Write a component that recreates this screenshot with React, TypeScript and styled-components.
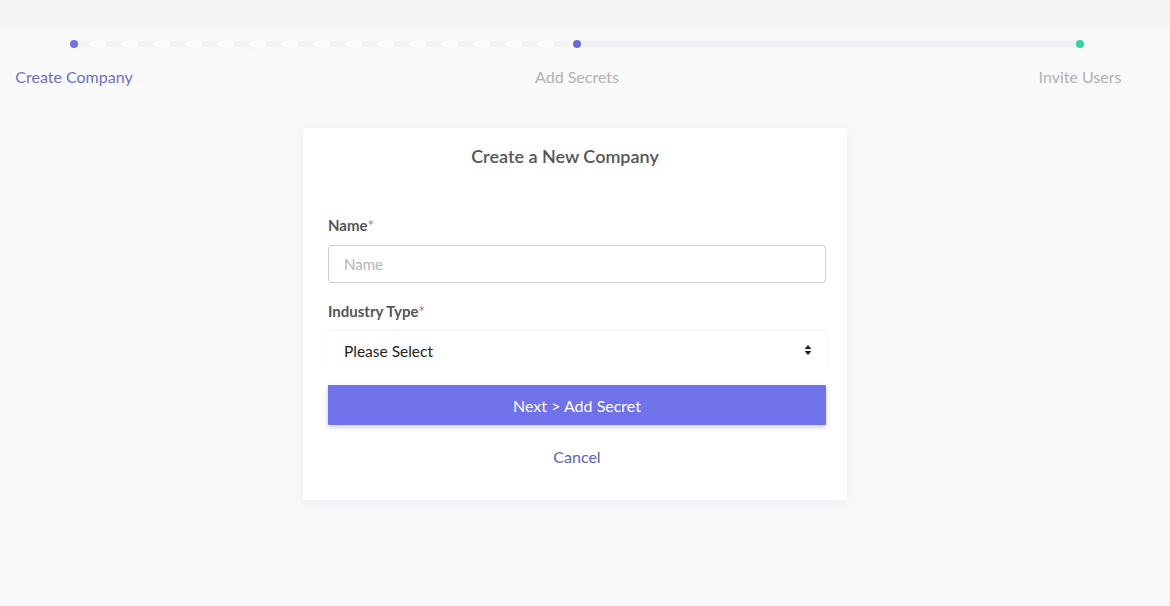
import * as React from "react";
import styled, { createGlobalStyle } from "styled-components";

const Colors = {
  page: "#f9f9fc",
  primary: "#7072ea",
  link: "#5b5fc9",
  green: "#2fd6a2",
  text: "#555559",
  muted: "#b0b0b4",
};

const GlobalStyle = createGlobalStyle`
  html, body {
    margin: 0;
    padding: 0;
    background: ${Colors.page};
    font-family: Lato, "Open Sans", sans-serif;
  }
  * { box-sizing: border-box; }
`;

const Page = styled.div`
  width: 1170px;
  height: 606px;
  background: ${Colors.page};
  overflow: hidden;
`;

const StepperBar = styled.div`
  position: relative;
  display: flex;
  justify-content: space-between;
  height: 112px;
  padding: 37px 25px 0 9px;
  background: linear-gradient(
    to bottom,
    #f3f3f4 0px,
    #f3f3f4 22px,
    #f8f8f9 30px,
    #fafafb 100px
  );
`;

const Track = styled.div`
  position: absolute;
  top: 41px;
  left: 74px;
  right: 90px;
  display: flex;
  z-index: 0;
`;

const TrackSegment = styled.div<{ $dashed?: boolean }>`
  flex: 1;
  height: 6px;
  background: ${(p) =>
    p.$dashed
      ? "repeating-linear-gradient(to right, #f3f3f5 0 16px, #fcfcfd 16px 32px)"
      : "#f0f0f3"};
`;

const Step = styled.div`
  position: relative;
  z-index: 1;
  width: 130px;
  display: flex;
  flex-direction: column;
  align-items: center;
`;

const Dot = styled.span<{ $color: string }>`
  width: 8px;
  height: 8px;
  border-radius: 50%;
  background: ${(p) => p.$color};
  margin-top: 3px;
`;

const StepLabel = styled.span<{ $active?: boolean }>`
  margin-top: 20px;
  font-size: 16px;
  line-height: 18px;
  color: ${(p) => (p.$active ? "#6b6fcf" : Colors.muted)};
  white-space: nowrap;
`;

const Main = styled.div`
  display: flex;
  justify-content: center;
  padding: 16px 20px 0 0;
`;

const Card = styled.div`
  width: 544px;
  background: #fff;
  padding: 17px 21px 33px 25px;
  box-shadow: 0 2px 12px rgba(60, 60, 110, 0.07);
  display: flex;
  flex-direction: column;
`;

const Title = styled.h2`
  margin: 0 0 48px;
  padding-right: 24px;
  text-align: center;
  font-size: 18px;
  line-height: 22px;
  font-weight: 600;
  color: ${Colors.text};
`;

const Label = styled.label`
  display: block;
  font-size: 15px;
  line-height: 20px;
  font-weight: 700;
  color: ${Colors.text};
  margin-bottom: 10px;
`;

const Required = styled.span<{ $red?: boolean }>`
  color: ${(p) => (p.$red ? "#d9537a" : "#888")};
  font-weight: 400;
`;

const TextInput = styled.input`
  width: 100%;
  height: 38px;
  border: 1px solid #cfcfd3;
  border-radius: 3px;
  padding: 0 15px;
  font-family: inherit;
  font-size: 15px;
  color: #333;
  background: #fff;
  margin-bottom: 18px;
  outline: none;
  &::placeholder {
    color: #b5b5b8;
  }
`;

const SelectWrap = styled.div`
  position: relative;
  height: 39px;
  margin-bottom: 15px;
  box-shadow: 0 -1px 2px rgba(0, 0, 0, 0.06);
`;

const Select = styled.select`
  appearance: none;
  width: 100%;
  height: 100%;
  border: none;
  background: #fff;
  padding: 0 15px 0 16px;
  font-family: inherit;
  font-size: 15.5px;
  color: #222;
  outline: none;
`;

const Caret = styled.svg`
  position: absolute;
  right: 14px;
  top: 13px;
  pointer-events: none;
`;

const PrimaryButton = styled.button`
  width: 100%;
  height: 40px;
  border: none;
  border-radius: 1px;
  background: ${Colors.primary};
  color: #fff;
  font-family: inherit;
  font-size: 16px;
  box-shadow: 0 2px 5px rgba(70, 70, 160, 0.3);
  cursor: pointer;
  margin-bottom: 22px;
`;

const CancelLink = styled.a`
  align-self: center;
  font-size: 16px;
  line-height: 20px;
  color: ${Colors.link};
  text-decoration: none;
  cursor: pointer;
`;

const steps = [
  { label: "Create Company", color: Colors.primary, active: true },
  { label: "Add Secrets", color: "#6669dc", active: false },
  { label: "Invite Users", color: Colors.green, active: false },
];

const App: React.FunctionComponent = () => {
  return (
    <Page>
      <GlobalStyle />
      <StepperBar>
        <Track>
          <TrackSegment $dashed />
          <TrackSegment />
        </Track>
        {steps.map((s) => (
          <Step key={s.label}>
            <Dot $color={s.color} />
            <StepLabel $active={s.active}>{s.label}</StepLabel>
          </Step>
        ))}
      </StepperBar>

      <Main>
        <Card>
          <Title>Create a New Company</Title>

          <Label htmlFor="name">
            Name<Required>*</Required>
          </Label>
          <TextInput id="name" placeholder="Name" />

          <Label htmlFor="industry">
            Industry Type<Required $red>*</Required>
          </Label>
          <SelectWrap>
            <Select id="industry" defaultValue="">
              <option value="">Please Select</option>
            </Select>
            <Caret width="8" height="12" viewBox="0 0 8 12">
              <path d="M4 1 L7.5 5 H0.5 Z" fill="#222" />
              <path d="M4 11 L7.5 7 H0.5 Z" fill="#222" />
            </Caret>
          </SelectWrap>

          <PrimaryButton>Next &gt; Add Secret</PrimaryButton>
          <CancelLink>Cancel</CancelLink>
        </Card>
      </Main>
    </Page>
  );
};

export default App;
